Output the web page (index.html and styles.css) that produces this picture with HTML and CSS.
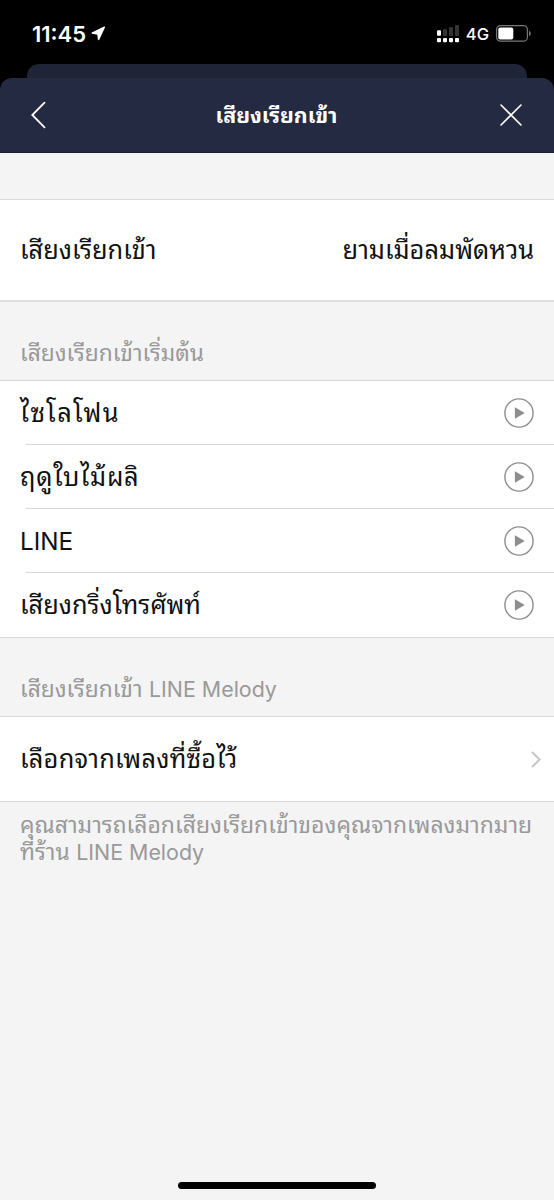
FILE: index.html
```html
<!DOCTYPE html>
<html lang="th">
<head>
<meta charset="utf-8">
<title>เสียงเรียกเข้า</title>
<link rel="stylesheet" href="styles.css">
</head>
<body>
<div class="screen">
  <div class="status">
    <span class="time">11:45</span>
    <svg class="loc" width="15" height="15" viewBox="0 0 15 15"><path d="M13.3 1.2 7.6 13.4 6.9 7.9 1.2 7.1Z" fill="#fff" stroke="#fff" stroke-width="1.5" stroke-linejoin="round"/></svg>
    <svg class="signal" width="23" height="18" viewBox="0 0 23 18">
      <g fill="#333"><rect x="6" y="4" width="4" height="7" rx="1"/><rect x="12" y="2" width="4" height="9" rx="1"/><rect x="18" y="0" width="4" height="11" rx="1"/></g>
      <g fill="#fff"><rect x="0" y="5.3" width="4" height="5.5" rx="1"/><rect x="0" y="13" width="4" height="4.2" rx="1"/><rect x="6" y="13" width="4" height="4.2" rx="1"/><rect x="12" y="13" width="4" height="4.2" rx="1"/><rect x="18" y="13" width="4" height="4.2" rx="1"/></g>
    </svg>
    <span class="net">4G</span>
    <svg class="battery" width="36" height="17" viewBox="0 0 36 17"><rect x=".6" y=".6" width="30.8" height="15.6" rx="4" fill="none" stroke="#777" stroke-width="1.2"/><rect x="2.3" y="2.4" width="15" height="12" rx="2" fill="#fff"/><path d="M33 5.6q3.6 2.8 0 5.6z" fill="#777"/></svg>
  </div>
  <div class="sheets">
    <div class="back-card"></div>
    <header class="nav">
      <svg width="15" height="28" viewBox="0 0 15 28"><path d="M13.5 1.7 1.3 14 13.5 26.3" fill="none" stroke="#fff" stroke-width="1.8" stroke-linecap="round"/></svg>
      <h1 class="title">เสียงเรียกเข้า</h1>
      <svg width="22" height="22" viewBox="0 0 22 22"><path d="M1 1 21 21M21 1 1 21" stroke="#fff" stroke-width="1.6" stroke-linecap="round"/></svg>
    </header>
  </div>
  <div class="gap"></div>
  <div class="row current"><span class="label">เสียงเรียกเข้า</span><span class="label">ยามเมื่อลมพัดหวน</span></div>
  <div class="section"><span>เสียงเรียกเข้าเริ่มต้น</span></div>
  <ul class="list">
    <li class="row"><span class="label xylophone">ไซโลโฟน</span><svg class="play" viewBox="0 0 30 30"><circle cx="15" cy="15" r="14.1"/><path d="M10.9 9.3 20.8 15 10.9 20.7Z"/></svg></li>
    <li class="row"><span class="label spring">ฤดูใบไม้ผลิ</span><svg class="play" viewBox="0 0 30 30"><circle cx="15" cy="15" r="14.1"/><path d="M10.9 9.3 20.8 15 10.9 20.7Z"/></svg></li>
    <li class="row"><span class="latin">LINE</span><svg class="play" viewBox="0 0 30 30"><circle cx="15" cy="15" r="14.1"/><path d="M10.9 9.3 20.8 15 10.9 20.7Z"/></svg></li>
    <li class="row"><span class="label">เสียงกริ่งโทรศัพท์</span><svg class="play" viewBox="0 0 30 30"><circle cx="15" cy="15" r="14.1"/><path d="M10.9 9.3 20.8 15 10.9 20.7Z"/></svg></li>
  </ul>
  <div class="section"><span>เสียงเรียกเข้า <span class="en">LINE Melody</span></span></div>
  <div class="row melody"><span class="label purchased">เลือกจากเพลงที่ซื้อไว้</span><svg width="10" height="17" viewBox="0 0 10 17"><path d="M1 1 8.6 8.5 1 16" fill="none" stroke="#c7c7cb" stroke-width="2"/></svg></div>
  <div class="note"><div>คุณสามารถเลือกเสียงเรียกเข้าของคุณจากเพลงมากมาย</div><div>ที่ร้าน <span class="en">LINE Melody</span></div></div>
  <div class="home"></div>
</div>
</body>
</html>
```
FILE: styles.css
```css
* { box-sizing: border-box; }
body { margin: 0; font-family: Inter, "Noto Sans Thai Looped", "Noto Looped Thai", Thonburi, Loma, Waree, Garuda, Umpush, sans-serif; }
svg { display: block; flex: none; }
.screen { width: 554px; height: 1200px; background: #f4f4f4; display: flex; flex-direction: column; overflow: hidden; }
.status { height: 64px; flex: none; background: #000; color: #fff; display: flex; align-items: center; padding: 3px 22px 0 32px; }
.time { font-size: 22px; font-weight: 600; }
.loc { margin-left: 5px; }
.signal { margin-left: auto; }
.net { font-size: 16.5px; font-weight: 500; margin: 0 7px 0 6px; }
.sheets { flex: none; background: #000; }
.back-card { height: 14px; margin: 0 27px; border-radius: 12px 12px 0 0; background: #1f2537; }
.nav { height: 75px; color: #fff; background: #232a42; border-bottom: 1px solid #1c2133; border-radius: 12px 12px 0 0; display: flex; justify-content: space-between; align-items: center; padding: 0 32px 0 31px; }
.title { margin: 0 0 0 7px; padding-bottom: 4px; font-size: 21.4px; font-weight: 700; }
.gap { height: 46px; flex: none; }
.row { display: flex; align-items: center; justify-content: space-between; padding: 0 20px; background: #fff; color: #111; font-size: 25.4px; white-space: nowrap; }
.label { padding-bottom: 6px; }
.current { height: 103px; flex: none; border-top: 1px solid #dadada; border-bottom: 2px solid #dedede; }
.section { height: 78px; flex: none; padding: 31px 20px 0; font-size: 22.8px; color: #999; white-space: nowrap; }
.en { font-size: 21.4px; }
.latin { font-size: 24.3px; }
.list { margin: 0; padding: 0; list-style: none; border-top: 1px solid #d8d8d8; border-bottom: 1px solid #d8d8d8; }
.list .row { height: 64px; }
.list .row:not(:last-child) { background: linear-gradient(#d8d8d8, #d8d8d8) 26px 63px / 528px 1px no-repeat #fff; }
.xylophone { letter-spacing: 1.4px; }
.spring { letter-spacing: .8px; }
.purchased { letter-spacing: .25px; }
.play { width: 30px; height: 30px; margin: 0 .5px 1px 0; fill: #8e8e8e; }
.play circle { fill: none; stroke: #8e8e8e; stroke-width: 1.4; }
.melody { height: 86px; flex: none; border-top: 1px solid #dadada; border-bottom: 1px solid #dadada; padding-right: 13px; }
.note { padding: 10px 20px; font-size: 22.95px; line-height: 27px; color: #999; white-space: nowrap; }
.home { width: 198px; height: 7px; border-radius: 4px; background: #000; margin: auto auto 11px; }
```
